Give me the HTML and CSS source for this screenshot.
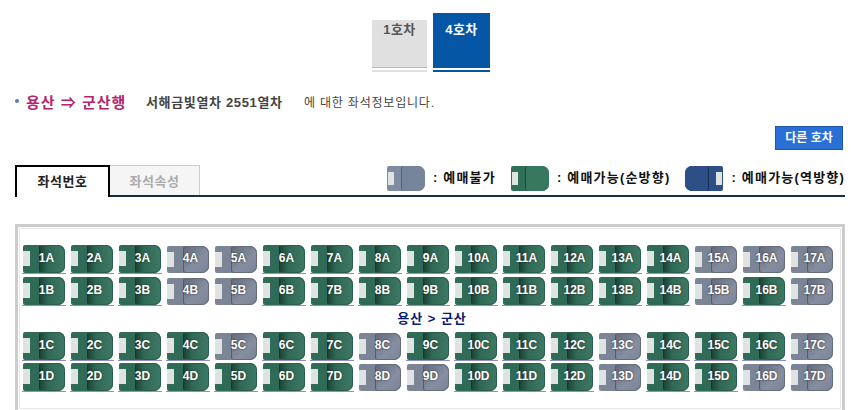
FILE: index.html
```html
<!DOCTYPE html>
<html lang="ko">
<head>
<meta charset="utf-8">
<title>좌석정보</title>
<link rel="stylesheet" href="styles.css">
</head>
<body>
<div class="page">
  <div class="cars">
    <a class="car car-off">1호차</a>
    <a class="car car-on">4호차</a>
  </div>
  <div class="info">
    <i class="dot"></i><b class="route">용산 ⇒ 군산행</b><b class="train">서해금빛열차 2551열차</b><span class="desc">에 대한 좌석정보입니다.</span>
  </div>
  <div class="other"><a class="other-btn">다른 호차</a></div>
  <div class="tabbar">
    <a class="tab tab-on">좌석번호</a>
    <a class="tab tab-off">좌석속성</a>
    <div class="legend">
      <i class="seat-icon grey"></i><span class="legend-text">: 예매불가</span>
      <i class="seat-icon green"></i><span class="legend-text">: 예매가능(순방향)</span>
      <i class="seat-icon blue"></i><span class="legend-text last">: 예매가능(역방향)</span>
    </div>
  </div>
  <div class="map">
    <div class="row" id="a"></div>
    <div class="row row-b" id="b"></div>
    <div class="dir">용산 &gt; 군산</div>
    <div class="row" id="c"></div>
    <div class="row row-d" id="d"></div>
  </div>
</div>
<script src="seats.js"></script>
</body>
</html>
```
FILE: seats.js
```js
var blocked = {
  a: [4, 5, 15, 16, 17],
  b: [4, 5, 15, 17],
  c: [5, 8, 13, 17],
  d: [8, 9, 13, 16, 17]
};
Object.keys(blocked).forEach(function (row) {
  var el = document.getElementById(row);
  for (var n = 1; n <= 17; n++) {
    var isBlocked = blocked[row].indexOf(n) >= 0;
    var cell = document.createElement('div');
    cell.className = 'cell' + (isBlocked ? '' : ' open');
    var s = document.createElement('div');
    s.className = 'seat ' + (isBlocked ? 'grey' : 'green');
    s.textContent = n + row.toUpperCase();
    cell.appendChild(s);
    el.appendChild(cell);
  }
});
```
FILE: styles.css
```css
html, body { margin: 0; padding: 0; background: #fff; }
body { width: 856px; height: 410px; overflow: hidden; font-family: "Liberation Sans", "Noto Sans CJK KR", sans-serif; }
.page { padding: 13px 11px 0 15px; }

.cars { display: flex; justify-content: center; align-items: flex-end; gap: 6px; padding-left: 2px; height: 59px; }
.car { display: block; text-align: center; font-size: 13px; line-height: 16px; letter-spacing: .5px; font-weight: 700; box-sizing: border-box; margin-bottom: 4px; }
.car-off { width: 55px; height: 48px; padding-top: 2px; background: #e0e0e0; color: #555; border-bottom: 1px solid #bbb; box-shadow: 0 2px 0 #fff, 0 4px 0 #e0e0e0; }
.car-on { width: 57px; height: 55px; padding-top: 9px; background: #0556a5; color: #fff; box-shadow: 0 2px 0 #fff, 0 4px 0 #0556a5; }

.info { display: flex; align-items: center; height: 20px; margin-top: 19px; white-space: nowrap; }
.dot { width: 4px; height: 4px; border-radius: 50%; background: #5a7fb8; margin-right: 7px; }
.route { font-size: 15px; letter-spacing: 1px; color: #b5246f; width: 120px; }
.train { font-size: 13px; letter-spacing: .65px; color: #444; width: 158px; }
.desc { font-size: 12px; letter-spacing: .8px; color: #444; }

.other { display: flex; justify-content: flex-end; margin-top: 15px; padding-right: 2px; }
.other-btn { width: 68px; height: 24px; line-height: 22px; box-sizing: border-box; background: #2a6fd6; border: 1px solid #1d58a8; color: #fff; font-size: 12px; font-weight: 700; text-align: center; }

.tabbar { display: flex; align-items: flex-end; height: 30px; margin-top: 15px; border-bottom: 2px solid #12304a; }
.tab { display: block; box-sizing: border-box; text-align: center; font-size: 13px; letter-spacing: .5px; font-weight: 700; }
.tab-on { width: 95px; height: 32px; line-height: 29px; margin-bottom: -2px; border: 2px solid #000; border-bottom: 0; background: #fff; color: #222; }
.tab-off { width: 90px; height: 30px; line-height: 31px; border: 1px solid #ccc; border-left: 0; border-bottom: 0; background: #f5f5f5; color: #aaa; }
.legend { display: flex; align-items: center; margin-left: auto; height: 26px; align-self: flex-start; }
.legend-text { font-size: 13px; line-height: 24px; letter-spacing: 1.2px; font-weight: 700; color: #111; white-space: nowrap; margin: 0 15px 0 8px; }
.legend-text.last { margin-right: 0; }

.map { margin-top: 27px; height: 189px; box-sizing: border-box; border: 3px solid #ccc; padding: 18px 0 0 4px; background: #fff; box-shadow: inset 0 0 0 1px #fff, inset 0 0 0 2px #e8e8e8; }
.row { display: flex; gap: 4px; }
.row-b { margin-top: 3px; }
.row-d { margin-top: 2px; }
.dir { height: 26px; line-height: 25px; text-align: center; font-size: 13px; letter-spacing: 1px; font-weight: 700; color: #0a1a70; }

.cell { width: 44px; height: 29px; box-sizing: border-box; padding: 0 1px; display: flex; align-items: flex-end; border-bottom: 1px solid transparent; }
.cell.open { border-bottom-color: #8f8fc0; }

.seat, .seat-icon { position: relative; display: block; box-sizing: border-box; isolation: isolate; }
.seat { width: 42px; height: 28px; line-height: 27px; padding-left: 5px; text-align: center; color: #fff; font-size: 12px; font-weight: 700; border-radius: 2px 7px 7px 2px; text-shadow: 0 0 2px #222; }
.seat::before, .seat-icon::before { content: ""; position: absolute; background: #dfe3e2; }
.seat::before { left: 0; top: 6px; width: 7px; height: 15px; }
.seat::after, .seat-icon::after { content: ""; position: absolute; top: 0; bottom: 0; box-sizing: border-box; z-index: -1; border-radius: 3px 7px 7px 3px; }
.seat::after { left: 16px; right: 0; }
.seat.green { background: #2f6b57; }
.seat.green::after { background: linear-gradient(90deg, #1c4437, #306a56 35%, #3c7865); border: 1px solid #2a5f4d; border-left-color: #17382d; }
.seat.grey { background: #7c8596; height: 27px; line-height: 25px; }
.seat.grey::after { background: linear-gradient(135deg, #636b7c, #868fa1 60%, #7b8496); border: 1px solid #656c7a; border-left-color: #545b69; }

.seat-icon { width: 38px; height: 25px; border-radius: 2px 7px 7px 2px; }
.seat-icon::before { left: 1px; top: 6px; width: 6px; height: 13px; z-index: 1; }
.seat-icon::after { left: 14px; right: 0; }
.seat-icon.grey { background: #7f8da2; }
.seat-icon.grey::after { background: #76859b; border-left: 1px solid #556173; }
.seat-icon.green { background: #2f7059; }
.seat-icon.green::after { background: #37785f; border-left: 1px solid #1f4a3a; }
.seat-icon.blue { background: #2c4f86; border-radius: 7px 2px 2px 7px; }
.seat-icon.blue::before { left: auto; right: 1px; }
.seat-icon.blue::after { left: 0; right: 14px; background: #2c4f86; border-right: 1px solid #1b2f55; border-radius: 7px 3px 3px 7px; }
```
